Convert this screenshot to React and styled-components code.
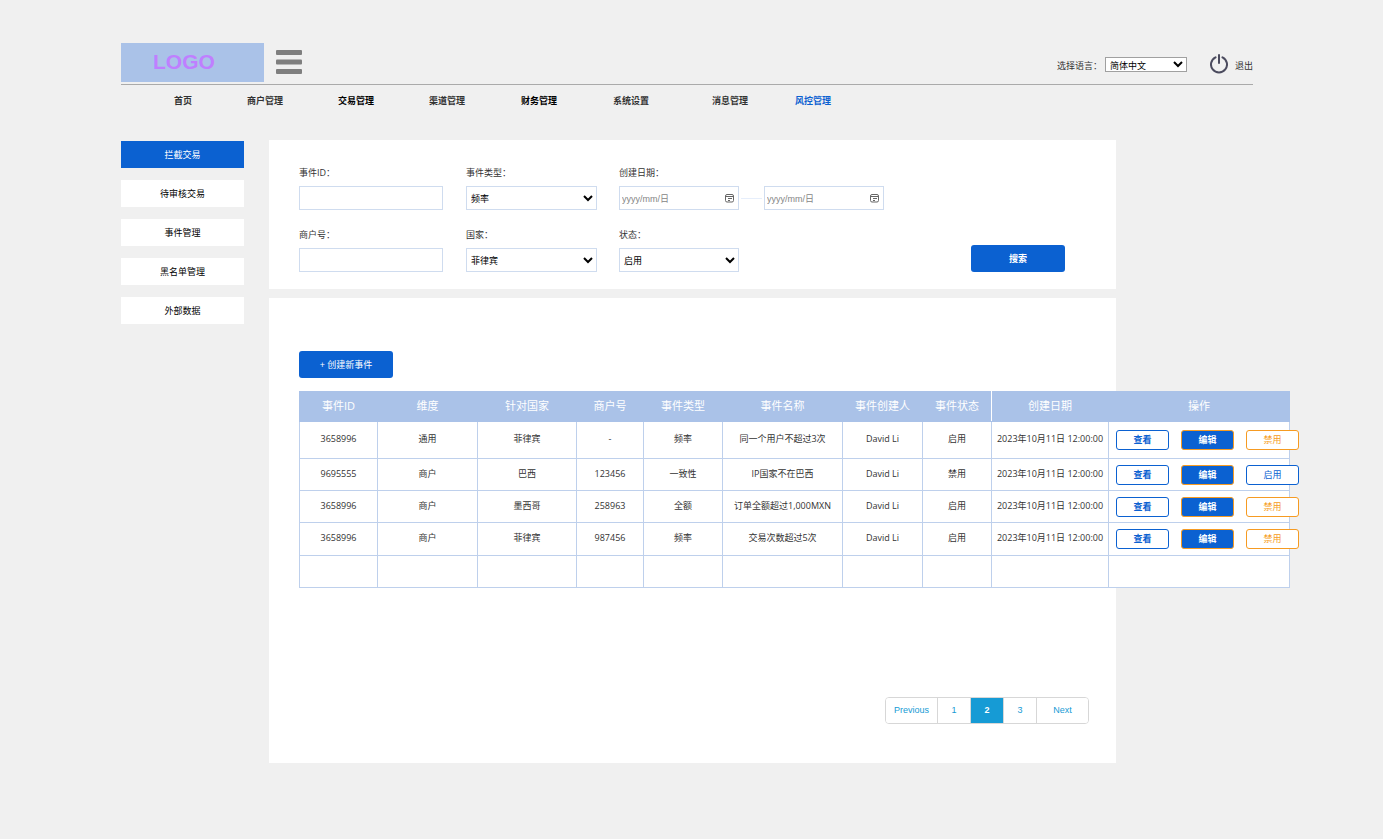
import styled, { createGlobalStyle } from 'styled-components';

const GlobalStyle = createGlobalStyle`
  :root {
    --blue: #0b61d1;
    --lightBlue: #aac2e8;
    --line: #bed0ec;
    --field: #cfdcef;
    --orange: #f69b22;
    --cyan: #169bd5;
    --text: #333;
  }
  * {
    box-sizing: border-box;
  }
  body {
    margin: 0;
    background: #f0f0f0;
    color: var(--text);
    font-family: 'Open Sans', 'Noto Sans CJK SC', sans-serif;
    font-size: 9px;
    line-height: 14px;
  }
  button, input, select {
    font: inherit;
  }
  a {
    color: inherit;
    text-decoration: none;
  }
`;

const PageStyles = styled.div`
  padding: 43px 130px 0 121px;
`;

const HeaderStyles = styled.header`
  display: flex;
  align-items: flex-start;
  padding-bottom: 2px;
  border-bottom: 1px solid #aaa;
`;

const LogoStyles = styled.a`
  width: 143px;
  height: 39px;
  padding-left: 32px;
  background: var(--lightBlue);
  color: #bf7fff;
  font-family: 'Liberation Sans', Arial, sans-serif;
  font-size: 21px;
  font-weight: 700;
  line-height: 38px;
`;

const MenuButtonStyles = styled.button`
  margin: 7px 0 0 12px;
  padding: 0;
  border: 0;
  background: none;
  line-height: 0;
  cursor: pointer;
`;

const HeaderToolsStyles = styled.div`
  display: flex;
  align-items: center;
  margin: 11px 0 0 auto;
  label {
    padding-top: 4px;
  }
`;

const LanguageStyles = styled.select`
  width: 82px;
  height: 15px;
  margin: 0 23px 0 3px;
  padding: 0;
  border: 1px solid #a0a0a0;
  border-radius: 0;
  background-color: #fff;
  color: #000;
`;

const LogoutStyles = styled.a`
  display: flex;
  align-items: center;
  gap: 7px;
  span {
    padding-top: 4px;
  }
`;

const NavStyles = styled.nav`
  display: grid;
  grid-template-columns: 73px 91px 91px 92px 92px 99px 83px auto;
  margin-bottom: 32px;
  padding: 9px 0 0 53px;
`;

const NavLinkStyles = styled.a`
  color: ${(props) => props.$color || 'var(--text)'};
  font-weight: 700;
  white-space: nowrap;
`;

const BodyStyles = styled.div`
  display: flex;
  align-items: flex-start;
  gap: 25px;
`;

const SidebarStyles = styled.aside`
  display: flex;
  flex: none;
  flex-direction: column;
  gap: 12px;
  width: 123px;
  padding-top: 1px;
`;

const SideLinkStyles = styled.a`
  background: ${(props) => (props.$active ? 'var(--blue)' : '#fff')};
  color: ${(props) => (props.$active ? '#fff' : '#000')};
  line-height: 27px;
  text-align: center;
`;

const MainStyles = styled.main`
  display: flex;
  flex: 1;
  flex-direction: column;
  gap: 9px;
  min-width: 0;
  margin-right: 137px;
`;

const FilterStyles = styled.form`
  display: grid;
  grid-template-columns: 145px 131px 266px 1fr;
  gap: 18px 22px;
  padding: 26px 30px 17px;
  background: #fff;
`;

const FieldStyles = styled.div`
  display: flex;
  flex-direction: column;
  align-items: flex-start;
  gap: 6px;
`;

const InputStyles = styled.input`
  width: ${(props) => props.$width || '144px'};
  height: 24px;
  padding: 0 4px;
  border: 1px solid var(--field);
`;

const SelectStyles = styled.select`
  width: ${(props) => props.$width || '131px'};
  height: 24px;
  padding: 0;
  border: 1px solid var(--field);
  border-radius: 0;
  background-color: #fff;
  color: #000;
`;

const DateRangeStyles = styled.div`
  display: flex;
  align-items: center;
  gap: 2px;
`;

const DashStyles = styled.span`
  width: 21px;
  height: 1px;
  background: #e6eefb;
`;

const DateBoxStyles = styled.div`
  display: flex;
  align-items: center;
  width: 120px;
  height: 24px;
  padding: 0 4px 0 2px;
  border: 1px solid var(--field);
  input {
    flex: 1;
    min-width: 0;
    padding: 2px 0 0;
    border: 0;
    outline: 0;
    font-family: 'Liberation Sans', 'Noto Sans CJK SC', sans-serif;
  }
  input::placeholder {
    color: #858585;
  }
`;

const PrimaryButtonStyles = styled.button`
  width: 94px;
  height: 27px;
  padding: 0;
  border: 0;
  border-radius: 3px;
  background: var(--blue);
  color: #fff;
  cursor: pointer;
`;

const SearchButtonStyles = styled(PrimaryButtonStyles)`
  align-self: end;
  justify-self: end;
  margin-right: 21px;
  font-weight: 700;
`;

const ResultStyles = styled.section`
  padding: 53px 27px 39px 30px;
  background: #fff;
`;

const TableStyles = styled.table`
  width: 990px;
  margin-top: 13px;
  border-collapse: collapse;
  table-layout: fixed;
  background: #fff;
  text-align: center;
  th {
    height: 30px;
    padding: 0 0 2px;
    border: 1px solid var(--lightBlue);
    background: var(--lightBlue);
    color: #fff;
    font-size: 11px;
    font-weight: 400;
  }
  th.split {
    border-right-color: #fff;
  }
  td {
    height: 32px;
    padding: 0 0 2px;
    border: 1px solid var(--line);
    white-space: nowrap;
  }
  tbody tr:first-child td {
    height: 37px;
  }
  tbody tr:nth-child(4) td {
    height: 33px;
  }
`;

const ActionsStyles = styled.div`
  display: flex;
  gap: 12px;
  padding: 2px 0 0 7px;
`;

const ActionButtonStyles = styled.button`
  flex: none;
  width: 53px;
  height: 20px;
  padding: 0;
  border: 1px solid ${(props) => props.$border};
  border-radius: 3px;
  background: ${(props) => props.$fill || '#fff'};
  color: ${(props) => props.$color || props.$border};
  font-weight: ${(props) => (props.$bold ? 700 : 400)};
  cursor: pointer;
`;

const PaginationStyles = styled.nav`
  display: flex;
  width: fit-content;
  margin: 109px 0 0 auto;
  border: 1px solid #d7d7d7;
  border-radius: 4px;
  overflow: hidden;
  color: var(--cyan);
  font-family: 'Liberation Sans', Arial, sans-serif;
`;

const PageLinkStyles = styled.a`
  width: ${(props) => (props.$wide ? '52px' : '33px')};
  border-left: 1px solid #d7d7d7;
  background: ${(props) => (props.$active ? 'var(--cyan)' : '#fff')};
  color: ${(props) => (props.$active ? '#fff' : 'inherit')};
  font-weight: ${(props) => (props.$active ? 700 : 400)};
  line-height: 25px;
  text-align: center;
  &:first-child {
    width: 51px;
    border-left: 0;
  }
`;

const navItems = [
  { name: '首页' },
  { name: '商户管理' },
  { name: '交易管理', color: '#000' },
  { name: '渠道管理' },
  { name: '财务管理', color: '#000' },
  { name: '系统设置' },
  { name: '消息管理' },
  { name: '风控管理', color: 'var(--blue)' },
];

const sideItems = ['拦截交易', '待审核交易', '事件管理', '黑名单管理', '外部数据'];

const columns = [
  { name: '事件ID', width: 78 },
  { name: '维度', width: 100 },
  { name: '针对国家', width: 99 },
  { name: '商户号', width: 67 },
  { name: '事件类型', width: 79 },
  { name: '事件名称', width: 120 },
  { name: '事件创建人', width: 80 },
  { name: '事件状态', width: 69, split: true },
  { name: '创建日期', width: 117 },
  { name: '操作', width: 181 },
];

const time = '2023年10月11日 12:00:00';

const rows = [
  ['3658996', '通用', '菲律宾', '-', '频率', '同一个用户不超过3次', 'David Li', '启用', time],
  ['9695555', '商户', '巴西', '123456', '一致性', 'IP国家不在巴西', 'David Li', '禁用', time],
  ['3658996', '商户', '墨西哥', '258963', '全额', '订单全额超过1,000MXN', 'David Li', '启用', time],
  ['3658996', '商户', '菲律宾', '987456', '频率', '交易次数超过5次', 'David Li', '启用', time],
];

function CalendarIcon() {
  return (
    <svg width="9" height="9" viewBox="0 0 9 9" fill="none" stroke="#666">
      <rect x="0.5" y="0.5" width="8" height="7.5" rx="1.5" />
      <path d="M1 2.5h7M3 4.5h4M3 6.5h2" />
    </svg>
  );
}

function DateBox({ id, label }) {
  return (
    <DateBoxStyles>
      <input id={id} type="text" placeholder="yyyy/mm/日" aria-label={label} />
      <CalendarIcon />
    </DateBoxStyles>
  );
}

function Header() {
  return (
    <HeaderStyles>
      <LogoStyles href="#">LOGO</LogoStyles>
      <MenuButtonStyles type="button" aria-label="菜单">
        <svg width="26" height="24" viewBox="0 0 26 24" fill="#7f7f7f">
          <rect width="26" height="5" rx="1" />
          <rect y="9.5" width="26" height="5" rx="1" />
          <rect y="19" width="26" height="5" rx="1" />
        </svg>
      </MenuButtonStyles>
      <HeaderToolsStyles>
        <label htmlFor="language">选择语言：</label>
        <LanguageStyles id="language">
          <option>简体中文</option>
          <option>English</option>
        </LanguageStyles>
        <LogoutStyles href="#">
          <svg
            width="18"
            height="20"
            viewBox="0 0 18 20"
            fill="none"
            stroke="#4b4b5e"
            strokeWidth="2"
            strokeLinecap="round"
          >
            <path d="M9 1v8M5.5 3.3a8 8 0 1 0 7 0" />
          </svg>
          <span>退出</span>
        </LogoutStyles>
      </HeaderToolsStyles>
    </HeaderStyles>
  );
}

function Filter() {
  return (
    <FilterStyles onSubmit={(e) => e.preventDefault()}>
      <FieldStyles>
        <label htmlFor="event-id">事件ID：</label>
        <InputStyles id="event-id" type="text" />
      </FieldStyles>
      <FieldStyles>
        <label htmlFor="event-type">事件类型：</label>
        <SelectStyles id="event-type">
          <option>频率</option>
          <option>一致性</option>
          <option>全额</option>
        </SelectStyles>
      </FieldStyles>
      <FieldStyles>
        <label htmlFor="date-from">创建日期：</label>
        <DateRangeStyles>
          <DateBox id="date-from" label="开始日期" />
          <DashStyles />
          <DateBox id="date-to" label="结束日期" />
        </DateRangeStyles>
      </FieldStyles>
      <span />
      <FieldStyles>
        <label htmlFor="merchant">商户号：</label>
        <InputStyles id="merchant" type="text" />
      </FieldStyles>
      <FieldStyles>
        <label htmlFor="country">国家：</label>
        <SelectStyles id="country">
          <option>菲律宾</option>
          <option>巴西</option>
          <option>墨西哥</option>
        </SelectStyles>
      </FieldStyles>
      <FieldStyles>
        <label htmlFor="status">状态：</label>
        <SelectStyles id="status" $width="120px">
          <option>启用</option>
          <option>禁用</option>
        </SelectStyles>
      </FieldStyles>
      <SearchButtonStyles type="submit">搜索</SearchButtonStyles>
    </FilterStyles>
  );
}

function Actions({ status }) {
  const enabled = status === '启用';
  return (
    <ActionsStyles>
      <ActionButtonStyles type="button" $border="var(--blue)" $bold>
        查看
      </ActionButtonStyles>
      <ActionButtonStyles
        type="button"
        $border="var(--orange)"
        $fill="var(--blue)"
        $color="#fff"
        $bold
      >
        编辑
      </ActionButtonStyles>
      <ActionButtonStyles type="button" $border={enabled ? 'var(--orange)' : 'var(--blue)'}>
        {enabled ? '禁用' : '启用'}
      </ActionButtonStyles>
    </ActionsStyles>
  );
}

function EventTable() {
  return (
    <TableStyles>
      <colgroup>
        {columns.map((column) => (
          <col key={column.name} width={column.width} />
        ))}
      </colgroup>
      <thead>
        <tr>
          {columns.map((column) => (
            <th key={column.name} className={column.split ? 'split' : undefined}>
              {column.name}
            </th>
          ))}
        </tr>
      </thead>
      <tbody>
        {rows.map((row, i) => (
          <tr key={i}>
            {row.map((cell, j) => (
              <td key={j}>{cell}</td>
            ))}
            <td>
              <Actions status={row[7]} />
            </td>
          </tr>
        ))}
        <tr>
          {columns.map((column) => (
            <td key={column.name} />
          ))}
        </tr>
      </tbody>
    </TableStyles>
  );
}

export default function App() {
  return (
    <PageStyles>
      <GlobalStyle />
      <Header />
      <NavStyles>
        {navItems.map((item) => (
          <NavLinkStyles key={item.name} href="#" $color={item.color}>
            {item.name}
          </NavLinkStyles>
        ))}
      </NavStyles>
      <BodyStyles>
        <SidebarStyles>
          {sideItems.map((name, i) => (
            <SideLinkStyles key={name} href="#" $active={i === 0}>
              {name}
            </SideLinkStyles>
          ))}
        </SidebarStyles>
        <MainStyles>
          <Filter />
          <ResultStyles>
            <PrimaryButtonStyles type="button">+ 创建新事件</PrimaryButtonStyles>
            <EventTable />
            <PaginationStyles aria-label="分页">
              <PageLinkStyles href="#">Previous</PageLinkStyles>
              <PageLinkStyles href="#">1</PageLinkStyles>
              <PageLinkStyles href="#" $active>
                2
              </PageLinkStyles>
              <PageLinkStyles href="#">3</PageLinkStyles>
              <PageLinkStyles href="#" $wide>
                Next
              </PageLinkStyles>
            </PaginationStyles>
          </ResultStyles>
        </MainStyles>
      </BodyStyles>
    </PageStyles>
  );
}
